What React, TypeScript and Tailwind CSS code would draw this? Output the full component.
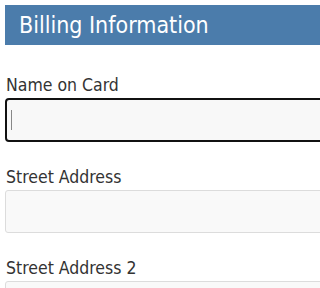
export default function App() {
  const font = { fontFamily: '"DejaVu Sans Condensed", "DejaVu Sans", sans-serif' }
  return (
    <div className="w-full h-[288px] overflow-hidden bg-white pl-[5px] pt-[5px]" style={font}>
      <div className="w-[640px]">
        {/* Section header */}
        <div className="h-[40px] bg-[#4b7cab] text-white text-[23px] pl-[14px] flex items-center">
          Billing Information
        </div>

        {/* Name on Card - focused */}
        <div className="mt-[30px]">
          <label className="block pl-[1px] text-[17.5px] leading-[20px] text-[#333]">Name on Card</label>
          <div className="mt-[3px] h-[44px] rounded-[4px] border-2 border-[#111] bg-[#f8f8f8] flex items-center pl-[4px]">
            <div className="w-[1px] h-[20px] bg-[#888]" />
          </div>
        </div>

        <div className="mt-[25px]">
          <label className="block pl-[1px] text-[17.5px] leading-[20px] text-[#333]">Street Address</label>
          <div className="mt-[3px] h-[43px] rounded-[3px] border border-[#dcdcdc] bg-[#f9f9f9]" />
        </div>

        <div className="mt-[25px]">
          <label className="block pl-[1px] text-[17.5px] leading-[20px] text-[#333]">Street Address 2</label>
          <div className="mt-[3px] h-[43px] rounded-[3px] border border-[#dcdcdc] bg-[#f9f9f9]" />
        </div>
      </div>
    </div>
  )
}
